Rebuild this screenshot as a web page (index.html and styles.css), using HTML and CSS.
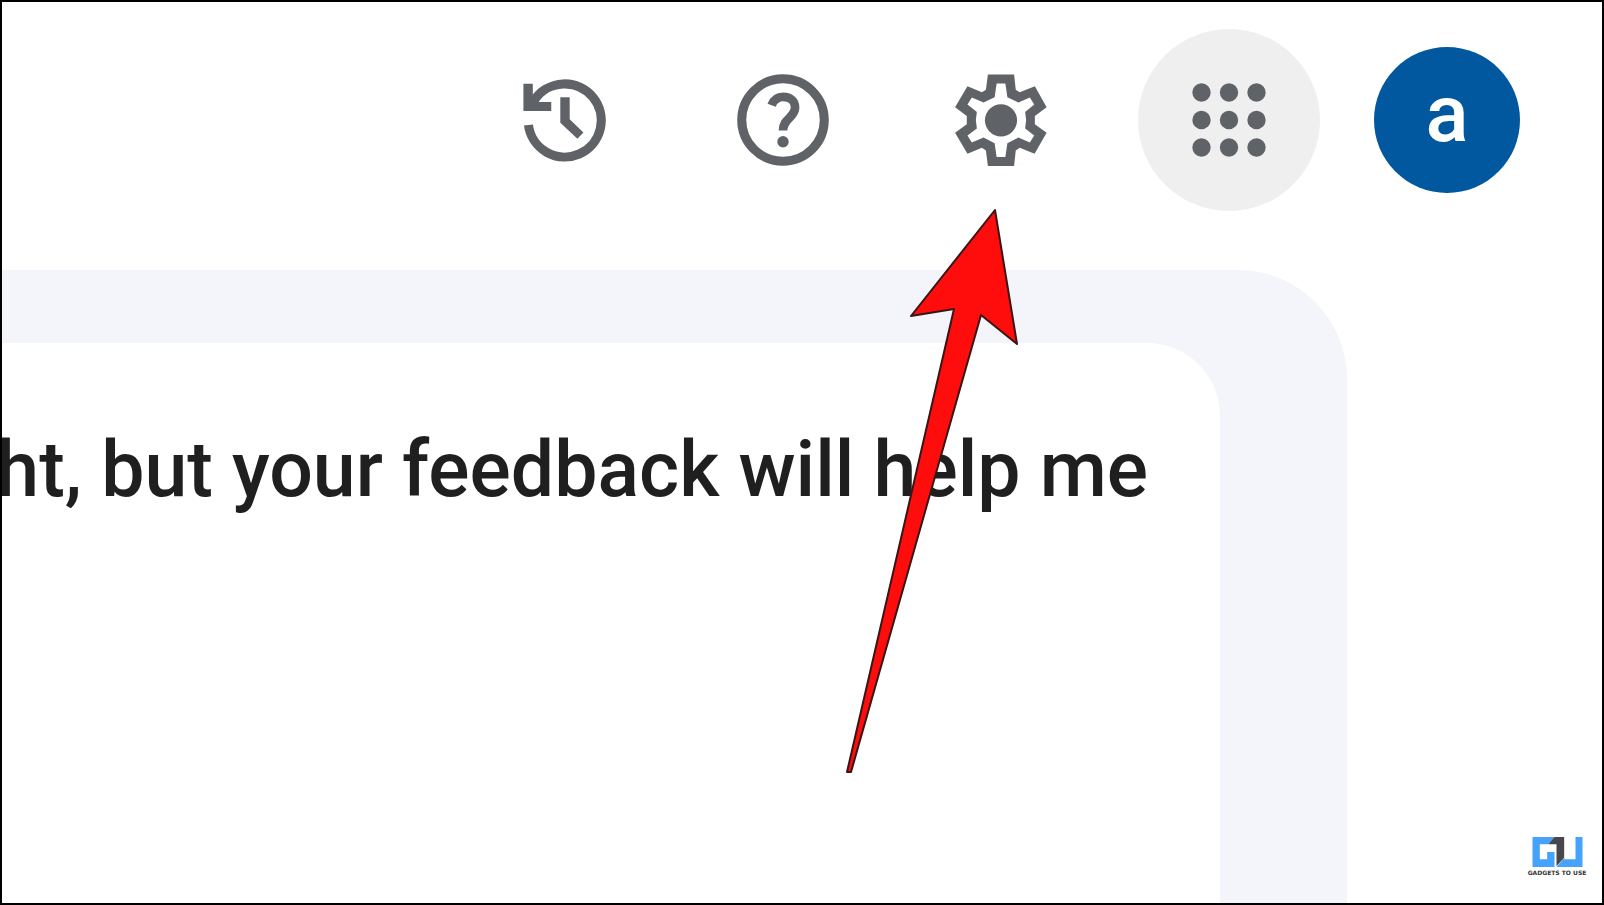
FILE: index.html
```html
<!DOCTYPE html>
<html lang="en">
<head>
<meta charset="utf-8">
<meta name="viewport" content="width=device-width, initial-scale=1">
<title>Settings</title>
<link rel="stylesheet" href="styles.css">
</head>
<body>
<div class="frame">
  <header class="toolbar">
    <button class="icon-button" type="button" aria-label="History">
      <svg class="icon" viewBox="29 16 328 328" aria-hidden="true">
        <path d="M84 195A109 109 0 1 0 102 120" fill="none" stroke="currentColor" stroke-width="27"/>
        <path d="M69 72H97V106L115 126H152V153H69ZM179 112H207V178L248 217L230 236L179 188Z" fill="currentColor"/>
      </svg>
    </button>
    <button class="icon-button" type="button" aria-label="Help">
      <svg class="icon" viewBox="684 16 328 328" aria-hidden="true">
        <circle cx="848" cy="180" r="123" fill="none" stroke="currentColor" stroke-width="27"/>
        <path d="M814 136C820 120 832 111 849 111C869 111 884 124 884 143C884 173 848 175 848 211" fill="none" stroke="currentColor" stroke-width="26"/>
        <circle cx="848" cy="245" r="17" fill="currentColor"/>
      </svg>
    </button>
    <button class="icon-button" type="button" aria-label="Settings">
      <svg class="icon" viewBox="50 16 328 328" aria-hidden="true">
        <path fill="currentColor" fill-rule="evenodd" d="M175 44H253L258 90L270 97L315 79L350 142L315 168V193L350 218L314 281L270 263L258 271L253 317H175L169 271L157 263L114 281L77 218L112 193V168L77 142L114 79L157 97L169 90ZM201 71L195 112L162 128L127 113L114 134L142 156L139 180L142 205L114 226L127 247L162 232L195 249L201 290H227L233 249L266 232L300 247L313 226L286 205L289 180L286 156L313 134L300 113L266 128L233 112L227 71Z"/>
        <circle cx="214" cy="181" r="48" fill="currentColor"/>
      </svg>
    </button>
    <button class="icon-button apps" type="button" aria-label="Apps">
      <svg class="icon" viewBox="0 0 24 24" aria-hidden="true" fill="currentColor">
        <circle cx="6" cy="6" r="2"/><circle cx="12" cy="6" r="2"/><circle cx="18" cy="6" r="2"/>
        <circle cx="6" cy="12" r="2"/><circle cx="12" cy="12" r="2"/><circle cx="18" cy="12" r="2"/>
        <circle cx="6" cy="18" r="2"/><circle cx="12" cy="18" r="2"/><circle cx="18" cy="18" r="2"/>
      </svg>
    </button>
    <button class="avatar" type="button" aria-label="Account a">a</button>
  </header>
  <main class="panel">
    <section class="card">
      <p class="message">ht, but your feedback will help me</p>
    </section>
  </main>
  <svg class="arrow" viewBox="0 0 120 572" aria-hidden="true">
    <path d="M151 6L67 112L110 105L3 568H7L137 111L173 140Z"/>
  </svg>
  <div class="brand">
    <svg class="brand-mark" viewBox="0 0 150 90" aria-hidden="true">
      <path fill="#45a3fb" d="M0 0H66L50 18V22H22V67H44V45H66V90H0ZM72 90L96 62V67H129V0H150V90Z"/>
      <path fill="#48484c" d="M66 0H95V62L72 88V22H50V18Z"/>
    </svg>
    <span>GADGETS TO USE</span>
  </div>
</div>
</body>
</html>
```
FILE: styles.css
```css
* { box-sizing: border-box; }

body {
  margin: 0;
  background: #fff;
  font-family: Roboto, "Liberation Sans", sans-serif;
}

.frame {
  position: relative;
  display: flex;
  flex-direction: column;
  min-height: 100vh;
  border: 2px solid #000;
  overflow: hidden;
}

.toolbar {
  display: flex;
  justify-content: flex-end;
  align-items: center;
  gap: 36px;
  padding: 27px 82px 59px 0;
}

.icon-button {
  display: grid;
  place-items: center;
  width: 182px;
  height: 182px;
  padding: 0;
  border: 0;
  border-radius: 50%;
  background: transparent;
  color: #5f6368;
}

.icon {
  display: block;
  width: 110px;
  height: 110px;
}

.apps {
  margin-left: 10px;
  margin-right: 18px;
  background: #efefef;
}

.avatar {
  width: 146px;
  height: 146px;
  padding: 0 0 12px;
  border: 0;
  border-radius: 50%;
  background: #02589f;
  color: #fff;
  font: 500 80px/1 Roboto, sans-serif;
}

.panel {
  flex: 1;
  display: flex;
  margin-right: 255px;
  padding: 73px 127px 0 0;
  border-top-right-radius: 109px;
  background: #f4f5fb;
}

.card {
  flex: 1;
  min-width: 0;
  padding: 79px 72px 0 0;
  border-top-right-radius: 73px;
  background: #fff;
}

.message {
  display: flex;
  justify-content: flex-end;
  margin: 0;
  color: #1f1f1f;
  font-size: 77px;
  font-weight: 500;
  line-height: 96px;
  white-space: nowrap;
}

.arrow {
  position: absolute;
  top: 202px;
  left: 842px;
  width: 120px;
  height: 572px;
  overflow: visible;
  fill: #ff0d0d;
  stroke: #3a1515;
  stroke-width: 2;
  stroke-linejoin: round;
}

.brand {
  position: absolute;
  right: 17px;
  bottom: 26px;
  display: flex;
  flex-direction: column;
  align-items: center;
  gap: 2px;
  width: 56px;
  color: #333;
  font: 700 6px/8px "DejaVu Sans", sans-serif;
  white-space: nowrap;
}

.brand-mark {
  display: block;
  width: 51px;
  height: 30px;
}
```
